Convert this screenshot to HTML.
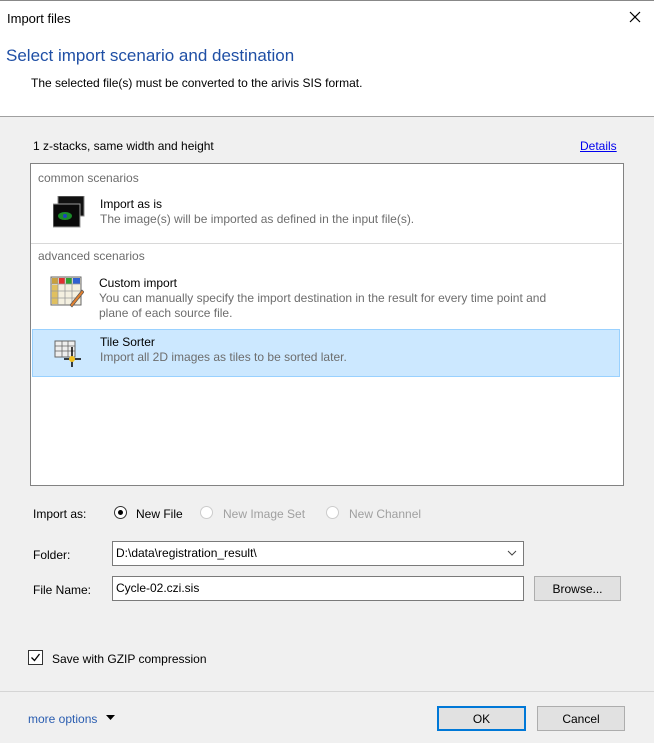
<!DOCTYPE html>
<html><head><style>
body{margin:0;width:654px;height:743px;background:#f0f0f0;font-family:"Liberation Sans",sans-serif;font-size:12px;color:#000;position:relative;overflow:hidden}
.a{position:absolute;white-space:nowrap}
.top{position:absolute;left:0;top:0;width:654px;height:116px;background:#fff;border-bottom:1px solid #a0a0a0}
.list{position:absolute;left:30px;top:163px;width:592px;height:321px;background:#fff;border:1px solid #828282}
.gray{color:#6d6d6d}
.btn{position:absolute;background:#e1e1e1;border:1px solid #adadad;text-align:center;box-sizing:border-box}
.inp{position:absolute;background:#fff;border:1px solid #7a7a7a;box-sizing:border-box;padding:4px 3px}
.radio{position:absolute;width:13px;height:13px;border:1px solid #333;border-radius:50%;box-sizing:border-box;background:#fff}
</style></head><body>
<div class="top"></div>
<div class="a" style="left:0;top:0;width:654px;height:1px;background:#888"></div>
<div class="a" style="left:7px;top:11px;font-size:13px">Import files</div>
<svg class="a" style="left:629px;top:11px" width="12" height="12"><path d="M1 1L11 11M11 1L1 11" stroke="#000" stroke-width="1.2"/></svg>
<div class="a" style="left:6px;top:46px;font-size:17px;color:#1f4fa5">Select import scenario and destination</div>
<div class="a" style="left:31px;top:76px">The selected file(s) must be converted to the arivis SIS format.</div>

<div class="a" style="left:33px;top:139px">1 z-stacks, same width and height</div>
<div class="a" style="left:580px;top:139px;color:#0000ee;text-decoration:underline">Details</div>

<div class="list"></div>
<div class="a gray" style="left:38px;top:171px">common scenarios</div>
<svg class="a" style="left:53px;top:196px" width="32" height="32"><rect x="5" y="0" width="26" height="20" fill="#111" stroke="#888"/><rect x="0" y="8" width="27" height="23" fill="#0a0a0a" stroke="#999"/><ellipse cx="12" cy="20" rx="7" ry="4" fill="#1b8a2a"/><circle cx="12" cy="20" r="2" fill="#2040c0"/></svg>
<div class="a" style="left:100px;top:197px">Import as is</div>
<div class="a gray" style="left:100px;top:212px">The image(s) will be imported as defined in the input file(s).</div>
<div class="a" style="left:31px;top:243px;width:591px;height:1px;background:#d8d8d8"></div>
<div class="a gray" style="left:38px;top:249px">advanced scenarios</div>
<svg class="a" style="left:50px;top:276px" width="34" height="32"><rect x="1" y="1" width="30" height="28" fill="#f4f0e0" stroke="#666"/><rect x="2" y="2" width="6" height="6" fill="#c8a040"/><rect x="9" y="2" width="6" height="6" fill="#e03030"/><rect x="16" y="2" width="6" height="6" fill="#30a030"/><rect x="23" y="2" width="7" height="6" fill="#3060d0"/><rect x="2" y="9" width="6" height="19" fill="#e0c060"/><path d="M1 8H31M1 15H31M1 22H31M8 1V29M15 1V29M22 1V29" stroke="#999" stroke-width=".8"/><path d="M20 29L32 14L34 16L22 31Z" fill="#e08030" stroke="#555" stroke-width=".7"/></svg>
<div class="a" style="left:99px;top:276px">Custom import</div>
<div class="a gray" style="left:99px;top:291px">You can manually specify the import destination in the result for every time point and</div>
<div class="a gray" style="left:99px;top:306px">plane of each source file.</div>
<div class="a" style="left:32px;top:329px;width:586px;height:46px;background:#cce8ff;border:1px solid #99d1ff"></div>
<svg class="a" style="left:53px;top:339px" width="30" height="30"><rect x="2" y="2" width="20" height="16" fill="#eee" stroke="#666"/><path d="M2 7H22M2 12H22M9 2V18M15 2V18" stroke="#666" stroke-width=".8"/><path d="M19 8V28M11 20H28" stroke="#000" stroke-width="1.5"/><circle cx="19" cy="20" r="3" fill="#f0c020"/></svg>
<div class="a" style="left:100px;top:335px">Tile Sorter</div>
<div class="a gray" style="left:100px;top:350px">Import all 2D images as tiles to be sorted later.</div>

<div class="a" style="left:33px;top:507px">Import as:</div>
<div class="radio" style="left:114px;top:506px"><div style="position:absolute;left:3px;top:3px;width:5px;height:5px;border-radius:50%;background:#000"></div></div>
<div class="a" style="left:136px;top:507px">New File</div>
<div class="radio" style="left:200px;top:506px;border-color:#ccc"></div>
<div class="a" style="left:223px;top:507px;color:#a0a0a0">New Image Set</div>
<div class="radio" style="left:326px;top:506px;border-color:#ccc"></div>
<div class="a" style="left:349px;top:507px;color:#a0a0a0">New Channel</div>

<div class="a" style="left:33px;top:548px">Folder:</div>
<div class="inp" style="left:112px;top:541px;width:412px;height:25px">D:\data\registration_result\</div>
<svg class="a" style="left:507px;top:549px" width="10" height="8"><path d="M1 2L5 6L9 2" stroke="#444" fill="none"/></svg>
<div class="a" style="left:33px;top:583px">File Name:</div>
<div class="inp" style="left:112px;top:576px;width:412px;height:25px">Cycle-02.czi.sis</div>
<div class="btn" style="left:534px;top:576px;width:87px;height:25px;padding-top:5px">Browse...</div>

<div class="a" style="left:28px;top:650px;width:15px;height:15px;border:1px solid #333;box-sizing:border-box;background:#fff"></div>
<svg class="a" style="left:30px;top:652px" width="11" height="11"><path d="M1.5 5.5L4.5 8.5L9.5 2" stroke="#000" stroke-width="1.3" fill="none"/></svg>
<div class="a" style="left:52px;top:652px">Save with GZIP compression</div>

<div class="a" style="left:0;top:691px;width:654px;height:1px;background:#d5d5d5"></div>
<div class="a" style="left:28px;top:712px;color:#2a5db0">more options</div>
<svg class="a" style="left:106px;top:715px" width="9" height="6"><path d="M0 0H9L4.5 5Z" fill="#000"/></svg>
<div class="btn" style="left:437px;top:706px;width:89px;height:25px;border:2px solid #0078d7;padding-top:4px;font-size:12px">OK</div>
<div class="btn" style="left:537px;top:706px;width:88px;height:25px;padding-top:5px;font-size:12px">Cancel</div>
</body></html>
